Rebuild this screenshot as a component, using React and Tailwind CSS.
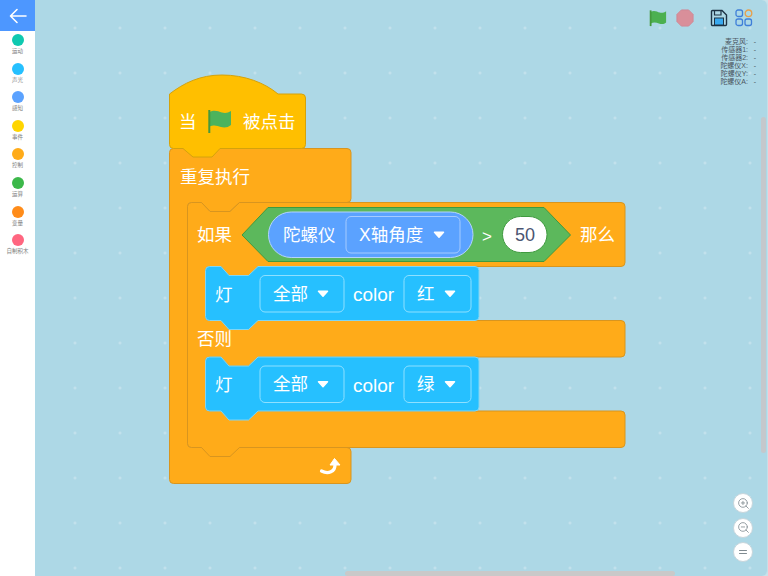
import { ZoomIn, ZoomOut, Equal } from "lucide-react";

const categories = [
  { name: "运动", color: "bg-[#0fc9b0]" },
  { name: "声光", color: "bg-[#26c0ff]" },
  { name: "感知", color: "bg-[#5ba2ff]" },
  { name: "事件", color: "bg-[#ffd500]" },
  { name: "控制", color: "bg-[#ffab19]" },
  { name: "运算", color: "bg-[#3cb84a]" },
  { name: "变量", color: "bg-[#ff8c1a]" },
  { name: "自制积木", color: "bg-[#ff6680]" },
];

const readouts = ["麦克风", "传感器1", "传感器2", "陀螺仪X", "陀螺仪Y", "陀螺仪A"];

// bump under a block, drawn right to left, y is the edge it hangs from
const bump = (y) => `H258 L248.5 ${y + 9} H229 L221 ${y} `;

function Label({ x, y, size = 17.5, fill = "#fff", children }) {
  return (
    <text x={x} y={y} fontSize={size} fill={fill} dominantBaseline="central">
      {children}
    </text>
  );
}

function Caret({ x, y }) {
  return <path d={`M${x - 4.5} ${y - 2.5} h9 l-4.5 5 z`} fill="#fff" stroke="#fff" strokeWidth="1.5" strokeLinejoin="round" />;
}

function Dropdown({ x, y, w, h = 36.5, stroke = "#8ee0ff", fill = "#26c0ff", label, labelX, caretX }) {
  return (
    <g>
      <rect x={x} y={y} width={w} height={h} rx="5" fill={fill} stroke={stroke} strokeWidth="1" />
      <Label x={labelX} y={y + h / 2}>{label}</Label>
      <Caret x={caretX} y={y + h / 2} />
    </g>
  );
}

function LightBlock({ y, color }) {
  const d =
    `M205.5 ${y + 4} a4 4 0 0 1 4 -4 H221 L229 ${y + 9} H248.5 L258 ${y} H475 a4 4 0 0 1 4 4 V${y + 50} a4 4 0 0 1 -4 4 ` +
    bump(y + 54) +
    `H209.5 a4 4 0 0 1 -4 -4 Z`;
  return (
    <g>
      <path d={d} fill="#26c0ff" stroke="#7fd6f5" strokeWidth="1" />
      <Label x={215} y={y + 28}>灯</Label>
      <Dropdown x={260} y={y + 9} w={84} label="全部" labelX={273} caretX={323} />
      <Label x={353} y={y + 28} size={19}>color</Label>
      <Dropdown x={404} y={y + 9} w={67} label={color} labelX={417} caretX={450} />
    </g>
  );
}

function Scripts() {
  const repeat =
    "M169.5 152.5 a4 4 0 0 1 4 -4 H347 a4 4 0 0 1 4 4 V198.5 a4 4 0 0 1 -4 4 H239.5 L230 211.5 H210 L201.5 202.5 H191.5 a4 4 0 0 0 -4 4 V443.5 a4 4 0 0 0 4 4 H347 a4 4 0 0 1 4 4 V479.5 a4 4 0 0 1 -4 4 H173.5 a4 4 0 0 1 -4 -4 Z";
  const ifElse =
    "M187.5 206.5 a4 4 0 0 1 4 -4 H201.5 L210 211.5 H230 L239.5 202.5 H621 a4 4 0 0 1 4 4 V262.5 a4 4 0 0 1 -4 4 " +
    bump(266.5) +
    "H209.5 a4 4 0 0 0 -4 4 V316.5 a4 4 0 0 0 4 4 H621 a4 4 0 0 1 4 4 V353 a4 4 0 0 1 -4 4 " +
    bump(357) +
    "H209.5 a4 4 0 0 0 -4 4 V407 a4 4 0 0 0 4 4 H621 a4 4 0 0 1 4 4 V443.5 a4 4 0 0 1 -4 4 H239.5 L230 456.5 H210 L201.5 447.5 H191.5 a4 4 0 0 1 -4 -4 Z";
  const hat =
    "M169.5 94 C184 83 200 75 222 75 C245 75 265 83 278 94 H301.5 a4 4 0 0 1 4 4 V144.5 a4 4 0 0 1 -4 4 H220 L212 157 H193 L183 148.5 H173.5 a4 4 0 0 1 -4 -4 Z";

  return (
    <svg viewBox="35 0 733 576" className="absolute inset-0 h-[576px] w-[733px]">
      <path d={repeat} fill="#ffab19" stroke="#d8951f" strokeWidth="1" />
      <Label x={180} y={176.5}>重复执行</Label>

      <path d={ifElse} fill="#ffab19" stroke="#d8951f" strokeWidth="1" />
      <Label x={197} y={235}>如果</Label>
      <Label x={197} y={339}>否则</Label>
      <Label x={580} y={235}>那么</Label>

      <path d="M242 235 L268 207.5 H544 L570.5 235 L544 261.5 H268 Z" fill="#5cb85c" stroke="#3f9a3f" strokeWidth="1" />
      <rect x="268.5" y="212" width="204.5" height="45.5" rx="22.7" fill="#5ba2ff" stroke="#b4d3ff" strokeWidth="1" />
      <Label x={283} y={235}>陀螺仪</Label>
      <Dropdown x={346} y={216.5} w={114} stroke="#a6cbff" fill="#5ba2ff" label="X轴角度" labelX={359} caretX={439} />
      <Label x={482} y={236} size={17}>&gt;</Label>
      <rect x="502.5" y="216.5" width="44.5" height="36" rx="18" fill="#fff" stroke="#3f9a3f" strokeWidth="1" />
      <Label x={515} y={235} size={18} fill="#4b5572">50</Label>

      <LightBlock y={266.5} color="红" />
      <LightBlock y={357} color="绿" />

      <path d={hat} fill="#ffbf00" stroke="#d4a20c" strokeWidth="1" />
      <Label x={179} y={122}>当</Label>
      <path d="M209.5 112 C214 109.5 218 111 222 112.5 C225 113.5 228 113 231 111 V125 C228 127.5 224.5 128 221 127 C217 125.5 214 124.5 209.5 126.5 Z" fill="#4cb35c" />
      <path d="M209.3 110 V133" stroke="#45993d" strokeWidth="2" />
      <Label x={243} y={122}>被点击</Label>

      <path d="M321.5 471 C328 474.5 335.5 472 335 464" fill="none" stroke="#fff" strokeWidth="3.2" strokeLinecap="round" />
      <path d="M334.5 458.5 L340 465 H330 Z" fill="#fff" stroke="#fff" strokeLinejoin="round" />
    </svg>
  );
}

function Toolbar() {
  return (
    <div className="absolute right-[14px] top-[9px] flex items-center">
      <svg width="18" height="18" viewBox="0 0 20 20" className="mr-[9px]">
        <path d="M2 3 C6 1 9 3 12 4 C14 4.6 17 4 19 2.5 V15 C16.5 17 14 17 11 16 C8 15 5 14.5 2 16 Z" fill="#4cb050" />
        <path d="M1.8 1.5 V19" stroke="#45993d" strokeWidth="2" />
      </svg>
      <svg width="18" height="18" viewBox="0 0 20 20" className="mr-[16px]">
        <path d="M6 1 H14 L19 6 V14 L14 19 H6 L1 14 V6 Z" fill="#d98f9a" stroke="#cf8794" strokeLinejoin="round" />
      </svg>
      <svg width="18" height="18" viewBox="0 0 18 18" className="mr-[7px]">
        <path d="M1.5 2.5 a1 1 0 0 1 1 -1 H12 L16.5 6 V15.5 a1 1 0 0 1 -1 1 H2.5 a1 1 0 0 1 -1 -1 Z" fill="none" stroke="#1d3345" strokeWidth="1.4" />
        <rect x="4.5" y="9" width="9" height="7" fill="#38a9f0" stroke="#1d3345" strokeWidth="1" />
        <path d="M4.5 1.5 V6 H11 V1.5" fill="none" stroke="#1d3345" strokeWidth="1.2" />
      </svg>
      <svg width="18" height="18" viewBox="0 0 18 18">
        <rect x="1" y="1" width="6.5" height="6.5" rx="2" fill="none" stroke="#3f7fd9" strokeWidth="1.3" />
        <circle cx="13.5" cy="4.3" r="3.3" fill="none" stroke="#e8a04a" strokeWidth="1.3" />
        <rect x="1" y="10" width="6.5" height="6.5" rx="2" fill="none" stroke="#3f7fd9" strokeWidth="1.3" />
        <rect x="10" y="10" width="6.5" height="6.5" rx="2" fill="none" stroke="#3f7fd9" strokeWidth="1.3" />
      </svg>
    </div>
  );
}

export default function App() {
  return (
    <div className="flex h-[576px] w-[768px] overflow-hidden bg-[#c9e2ea] font-['Liberation_Sans','Noto_Sans_CJK_SC',sans-serif]">
      <aside className="flex w-[35px] shrink-0 flex-col bg-white">
        <div className="flex h-[31px] items-center justify-center bg-[#4d97ff]">
          <svg width="18" height="16" viewBox="0 0 18 16" fill="none" stroke="#fff" strokeWidth="1.6" strokeLinecap="round" strokeLinejoin="round">
            <path d="M17 8 H1.5 M8 1.5 L1.5 8 L8 14.5" />
          </svg>
        </div>
        <ul className="flex flex-col pt-[3px]">
          {categories.map((c) => (
            <li key={c.name} className="flex h-[28.6px] flex-col items-center">
              <span className={`h-[12px] w-[12px] rounded-full ${c.color}`} />
              <span className="whitespace-nowrap text-[5.5px] leading-[10px] text-[#7d7d7d]">{c.name}</span>
            </li>
          ))}
        </ul>
      </aside>

      <main className="relative flex-1 rounded-r-md border-r border-[#c5dfe8] bg-[#add8e6] bg-[radial-gradient(circle,#c8e4ee_1px,transparent_1.5px)] bg-[size:45px_45px] bg-[position:17.5px_5.5px]">
        <Scripts />
        <Toolbar />

        <div className="absolute right-[11px] top-[38px] flex flex-col items-end text-[7px] leading-[8px] text-[#4a5560]">
          {readouts.map((r) => (
            <div key={r} className="flex">
              <span>{r}:</span>
              <span className="w-[8px] text-right">-</span>
            </div>
          ))}
        </div>

        <div className="absolute right-[14px] top-[493px] flex flex-col gap-[4.7px]">
          <button className="flex h-[20px] w-[20px] items-center justify-center rounded-full border border-[#c8d6dc] bg-white text-[#7f8a90]">
            <ZoomIn size={13} strokeWidth={1.5} />
          </button>
          <button className="flex h-[20px] w-[20px] items-center justify-center rounded-full border border-[#c8d6dc] bg-white text-[#7f8a90]">
            <ZoomOut size={13} strokeWidth={1.5} />
          </button>
          <button className="flex h-[20px] w-[20px] items-center justify-center rounded-full border border-[#c8d6dc] bg-white text-[#7f8a90]">
            <Equal size={12} strokeWidth={2} />
          </button>
        </div>

        {/* workspace scrollbars */}
        <div className="absolute right-[1px] top-[117px] h-[336px] w-[5px] rounded-sm bg-[#c5c8cc]" />
        <div className="absolute bottom-0 left-[310px] h-[5px] w-[330px] rounded-sm bg-[#c9c9c9]" />
      </main>
    </div>
  );
}
